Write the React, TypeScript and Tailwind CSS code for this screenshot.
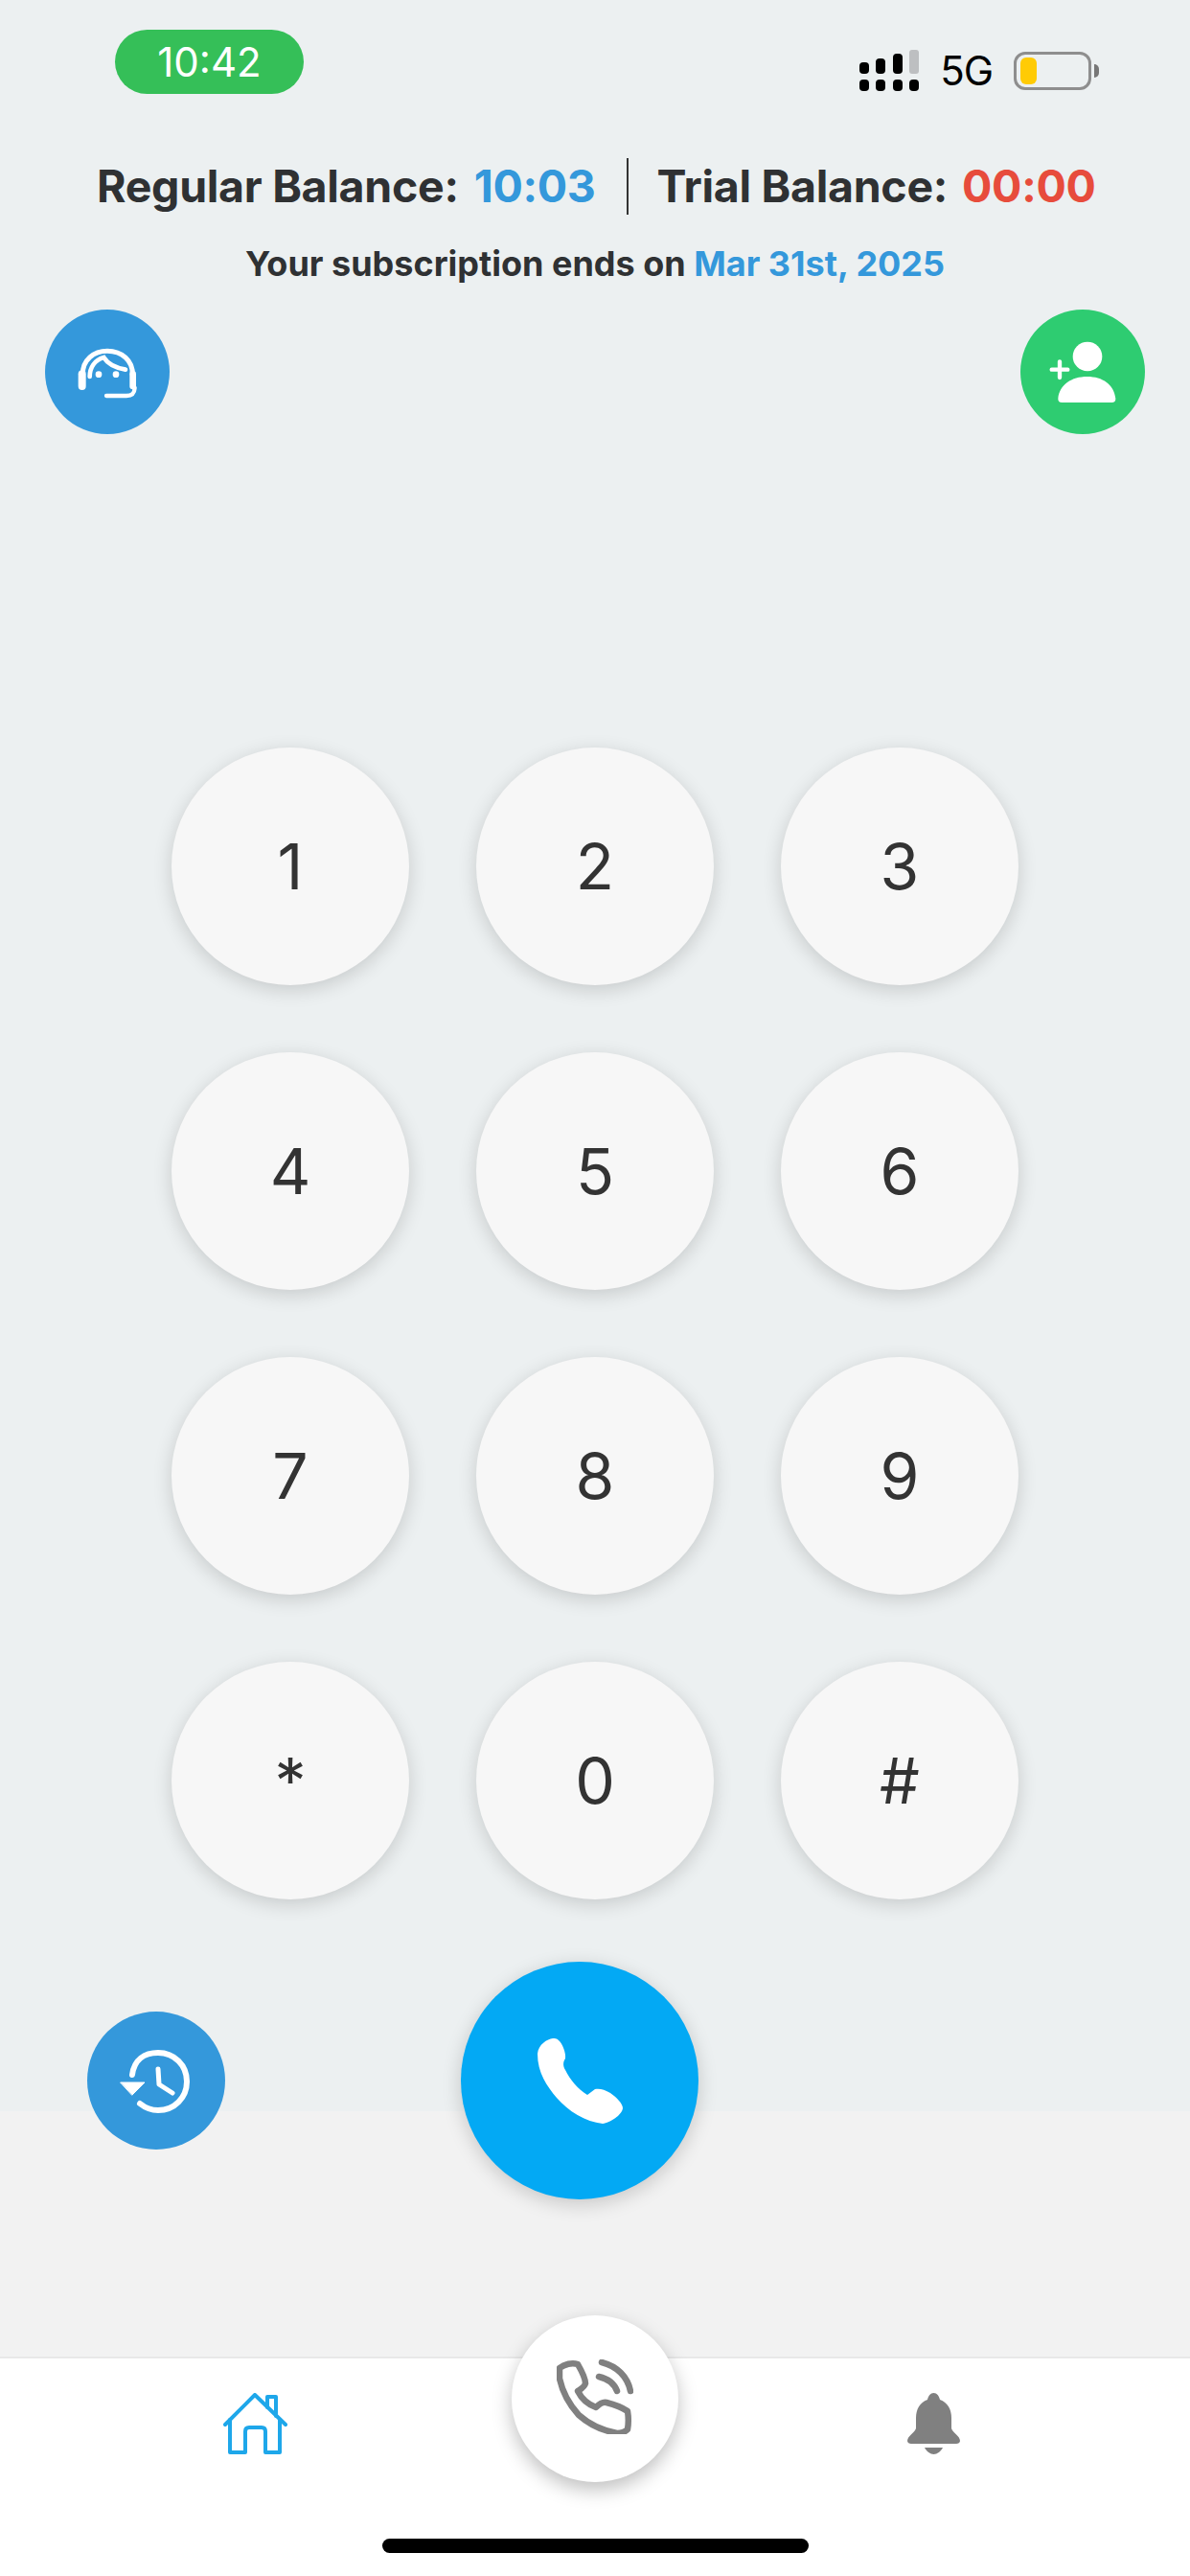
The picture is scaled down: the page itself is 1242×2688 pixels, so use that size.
const keys = ['1', '2', '3', '4', '5', '6', '7', '8', '9', '*', '0', '#'];

const SignalIcon = () => (
  <svg width="62" height="44" viewBox="0 0 62 44" fill="#000">
    <rect x="0" y="13" width="10" height="12" rx="4" />
    <rect x="17" y="9" width="10" height="16" rx="4" />
    <rect x="35" y="4" width="10" height="21" rx="4" />
    <rect x="52" y="0" width="10" height="25" rx="3" fill="#bdbfc1" />
    <rect x="0" y="31" width="10" height="12" rx="4" />
    <rect x="17" y="31" width="10" height="12" rx="4" />
    <rect x="35" y="31" width="10" height="12" rx="4" />
    <rect x="52" y="31" width="10" height="12" rx="4" />
  </svg>
);

const HeadsetIcon = () => (
  <svg width="130" height="130" viewBox="50 40 390 390" fill="none" stroke="#fff" strokeLinecap="round">
    <path d="M168 245C166 198 203 170 245 170C290 170 326 200 324 245" strokeWidth="15" />
    <path d="M166 242V280" strokeWidth="24" />
    <path d="M325 242V280" strokeWidth="20" />
    <path d="M190 250C190 222 205 198 234 190C245 208 268 222 302 228" strokeWidth="14" />
    <path d="M331 285C330 303 322 310 305 310H242" strokeWidth="13" />
    <circle cx="218" cy="243" r="10" fill="#fff" stroke="none" />
    <circle cx="272" cy="243" r="10" fill="#fff" stroke="none" />
  </svg>
);

const AddUserIcon = () => (
  <svg width="130" height="130" viewBox="45 40 390 390" fill="#fff">
    <circle cx="255" cy="187" r="46" />
    <path d="M163 318C168 275 205 250 254 250C303 250 338 275 343 318C344 326 339 331 331 331H175C167 331 162 326 163 318Z" />
    <path d="M143 228H193M168 203V253" fill="none" stroke="#fff" strokeWidth="13" strokeLinecap="round" />
  </svg>
);

const HistoryIcon = () => (
  <svg width="144" height="144" viewBox="0 0 144 144" fill="none" stroke="#fff" strokeLinecap="round" strokeLinejoin="round">
    <path d="M47 66C49 50 60 43 74 43C91 43 104 56 104 73C104 90 91 103 74 103C66 103 60 100 55 96" strokeWidth="6" />
    <path d="M35 74H60L47 87Z" fill="#fff" strokeWidth="1" />
    <path d="M74 60L75 76L89 85" strokeWidth="5" />
  </svg>
);

const CallIcon = () => (
  <svg width="89" height="89" viewBox="0 0 89 89" fill="#fff">
    <path d="M16 0C10 1 1 6 0 16C0 36 10 50 20 62C32 76 50 87 68 89C76 88 88 80 89 73C89 68 82 61 76 57C70 53 64 52 60 53L52 59C42 53 34 43 29 33C26 28 27 24 29 21C30 16 26 5 22 2C20 0 18 0 16 0Z" />
  </svg>
);

const HomeIcon = () => (
  <svg width="67" height="64" viewBox="0 0 67 64" fill="none" stroke="#1ea7ea" strokeWidth="4" strokeLinecap="round" strokeLinejoin="round">
    <path d="M2 33L33 2L65 33" />
    <path d="M7 28V62H23V40C23 37 25 36 27 36H40C43 36 44 38 44 40V62H59V28" />
    <path d="M46 15V4H55V24" />
  </svg>
);

const DialerIcon = () => (
  <svg width="80" height="78" viewBox="0 0 80 78" fill="none" stroke="#808080" strokeWidth="6.5" strokeLinecap="round" strokeLinejoin="round">
    <path d="M3 9C8 5 16 3 22 5C26 12 30 19 30 25C29 29 25 31 22 33C26 41 33 47 41 50C44 47 48 44 52 45C60 47 68 50 74 54C75 60 75 67 74 73C71 76 66 77 63 77C46 74 33 67 23 58C13 47 6 34 3 20C3 16 3 12 3 9Z" />
    <path d="M47 3C63 7 74 18 77 33" />
    <path d="M44 18C53 20 60 25 63 33" />
  </svg>
);

const BellIcon = () => (
  <svg width="55" height="64" viewBox="0 0 55 64" fill="#808080">
    <path d="M27.5 0C31 0 33 3 34 7C42 10 46 17 46 26V37C47 41 55 45 55 50C55 52 53 53 51 53H4C2 53 0 52 0 50C0 45 8 41 9 37V26C9 17 13 10 21 7C22 3 24 0 27.5 0Z" />
    <path d="M18 57H37C35 61 31 64 27.5 64C24 64 20 61 18 57Z" />
  </svg>
);

const App = () => {
  return (
    <div className="flex h-[2688px] w-[1242px] flex-col overflow-hidden bg-white font-['Inter',sans-serif] text-[#2f3133]">
      <main className="h-[2459px] bg-[linear-gradient(#ecf0f1_2203px,#f2f2f2_2203px)]">
        <div className="flex items-start justify-between pl-[120px] pr-[95px] pt-[31px]">
          <div className="flex h-[67px] w-[197px] items-center justify-center rounded-full bg-[#35bf58] text-[42px] leading-none text-white">
            10:42
          </div>
          <div className="mt-[21px] flex items-center text-black">
            <SignalIcon />
            <span className="ml-[22px] text-[42px] leading-none tracking-[-1px]">5G</span>
            <div className="ml-[22px] flex h-[40px] w-[81px] items-center rounded-[12px] border-[3px] border-[#8e8e8e] px-[4px]">
              <div className="h-[28px] w-[17px] rounded-[6px] bg-[#ffcb05]" />
            </div>
            <div className="ml-[3px] h-[14px] w-[5px] rounded-r-full bg-[#777]" />
          </div>
        </div>

        <div className="mt-[67px] flex h-[59px] items-center pl-[101px] text-[46.5px] font-bold tracking-[-0.3px]">
          <span>Regular Balance:</span>
          <span className="ml-[16px] text-[#3498db]">10:03</span>
          <div className="ml-[33px] h-full w-[2px] bg-[#333]" />
          <span className="ml-[29px]">Trial Balance:</span>
          <span className="ml-[15px] text-[#e74c3c]">00:00</span>
        </div>

        <p className="mt-[29px] text-center text-[36px] font-bold leading-[44px]">
          Your subscription ends on <span className="text-[#3498db]">Mar 31st, 2025</span>
        </p>

        <div className="mt-[26px] flex justify-between px-[47px]">
          <button className="flex size-[130px] items-center justify-center rounded-full bg-[#3498db]">
            <HeadsetIcon />
          </button>
          <button className="flex size-[130px] items-center justify-center rounded-full bg-[#2ecc71]">
            <AddUserIcon />
          </button>
        </div>

        <div className="ml-[179px] mt-[327px] grid w-fit grid-cols-3 gap-[70px]">
          {keys.map((key) => (
            <button
              key={key}
              className="flex size-[248px] items-center justify-center rounded-full bg-[#f7f7f7] text-[66px] text-[#333] shadow-[0_5px_20px_rgba(0,0,0,0.16)]"
            >
              {key}
            </button>
          ))}
        </div>

        <div className="ml-[91px] mt-[65px] flex items-center">
          <button className="flex size-[144px] items-center justify-center rounded-full bg-[#3498db]">
            <HistoryIcon />
          </button>
          <button className="ml-[246px] flex size-[248px] items-center justify-center rounded-full bg-[#03a9f4] shadow-[0_5px_20px_rgba(0,0,0,0.18)]">
            <CallIcon />
          </button>
        </div>
      </main>

      <footer className="relative flex-1 border-t-2 border-[#e8e8e8] bg-white">
        <button className="absolute left-[534px] top-[-45px] flex size-[174px] items-center justify-center rounded-full bg-white pb-[4px] shadow-[0_8px_20px_rgba(0,0,0,0.25)]">
          <DialerIcon />
        </button>
        <nav className="flex justify-between pl-[233px] pr-[240px] pt-[36px]">
          <HomeIcon />
          <BellIcon />
        </nav>
        <div className="mx-auto mt-[88px] h-[15px] w-[445px] rounded-full bg-black" />
      </footer>
    </div>
  );
};

export default App;
